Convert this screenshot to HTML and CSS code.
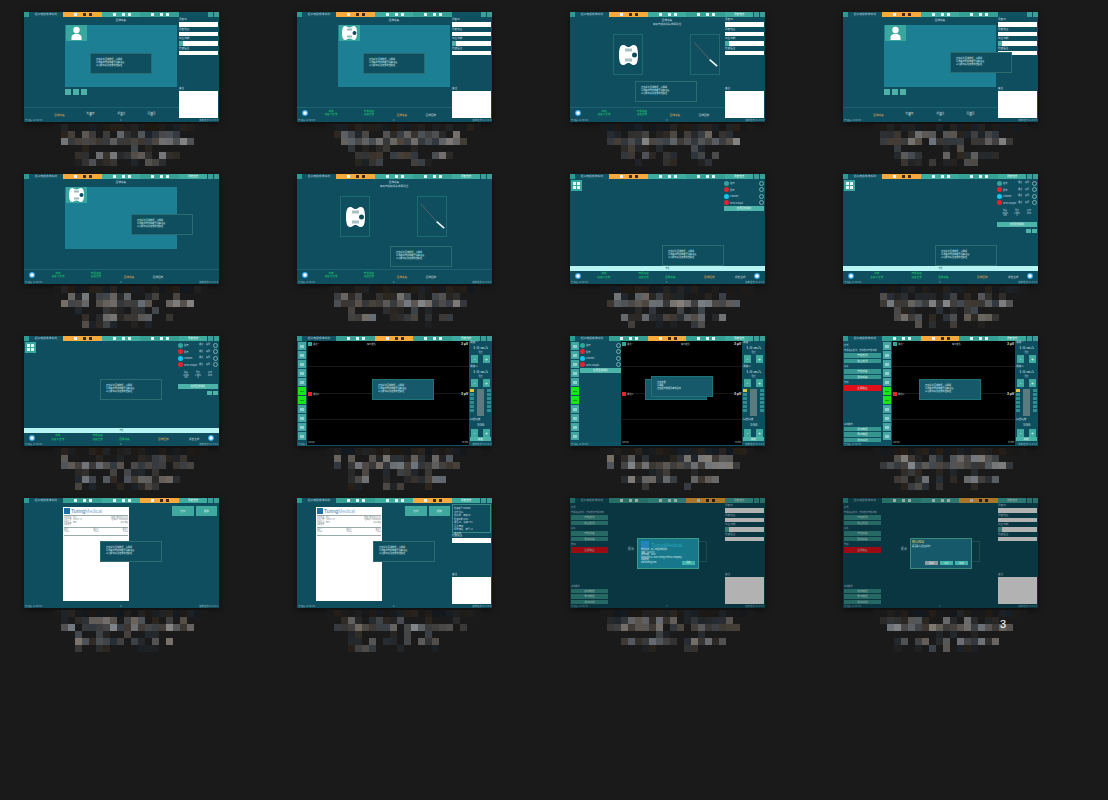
FILE: index.html
```html
<!DOCTYPE html>
<html lang="zh">
<head>
    <meta charset="UTF-8">
    <title>截图</title>
    <link rel="stylesheet" href="styles.css">
</head>
<body>
    <div id="gallery" class="gallery"></div>
    <script src="app.js"></script>
</body>
</html>
```
FILE: styles.css
```css
body{
    margin: 0;
    height: 800px;
    overflow: hidden;
    background-color: #1a1a1a;
    font-family: "Noto Sans CJK SC", "Liberation Sans", sans-serif;
}

.gallery{
    display: grid;
    grid-template-columns: repeat(4, 195px);
    grid-auto-rows: 162px;
    column-gap: 78px;
    padding: 12px 0 0 24px;
}

.tile{
    position: relative;
    width: 195px;
}

/* caption, pixelated */
.mosaic{
    display: grid;
    grid-template-columns: repeat(22, 7px);
    grid-auto-rows: 7px;
    position: absolute;
    left: 30px;
    top: 112px;
}
.loose-digit{
    position: absolute;
    left: 157px;
    top: 120px;
    font: 11px "Liberation Sans", sans-serif;
    color: #fff;
}

/* one screen */
.screen{
    position: relative;
    display: flex;
    flex-direction: column;
    width: 195px;
    height: 110px;
    overflow: hidden;
    background-color: #0f4e5f;
    box-shadow: 0 2px 6px rgba(0,0,0,.5);
    color: #c5dfe2;
    font-size: 2.6px;
    line-height: 1;
}
.dim{
    position: absolute;
    inset: 0;
    background-color: rgba(0,0,0,.3);
}

.topbar{
    display: flex;
    flex: none;
    height: 5px;
    background-color: #0f5261;
}
.home{ width: 5px; background-color: #2e9a94; }
.app-title{ width: 34px; text-align: center; line-height: 5px; font-size: 2.8px; color: #bcd; }
.tab{
    display: flex;
    align-items: center;
    width: 39px;
    padding-left: 11px;
    box-sizing: border-box;
    background-color: #3dac9f;
}
.tab.alt{ background-color: #359f94; }
.tab i{ width: 3px; height: 3px; background-color: #dff3f0; }
.tab i:first-child{ margin-right: 6px; }
.tab i:nth-child(2){ margin-right: 3px; }
.tab.on{ background-color: #f7a93b; }
.tab.on i + i{ background-color: #3d2a10; }
.tab4{
    width: 28px;
    background-color: #0f5261;
    text-align: center;
    line-height: 5px;
}
.tab4.lit{ background-color: #3dac9f; color: #fff; }
.sq{ width: 5px; margin-left: 1px; background-color: #3b9f98; }

.body{
    display: flex;
    flex: 1;
    min-height: 0;
}
.status{
    display: flex;
    flex: none;
    justify-content: space-between;
    height: 4px;
    padding: 0 1px;
    line-height: 4px;
    font-size: 2.4px;
    color: #8fb9c0;
}
.status.bar{ background-color: #0d5363; }

.main{
    display: flex;
    flex-direction: column;
    flex: 1;
    min-width: 0;
}
.stage{
    flex: 1;
    min-height: 0;
    padding-left: 41px;
}
.heading{
    width: 112px;
    height: 7px;
    line-height: 6px;
    text-align: center;
}
.heading.two{ height: 17px; line-height: 4px; padding-top: 1px; box-sizing: border-box; }
.panel{
    width: 112px;
    height: 62px;
    background-color: #1c7f93;
}
.avatar{
    display: block;
    margin: 1px;
    width: 21px;
    height: 16px;
    background-color: #3aa79f;
}
.mini-btns{
    display: flex;
    gap: 2px;
    margin-top: 2px;
}
.mini-btns i{ width: 6px; height: 6px; background-color: #4fb0a8; }

.boxes{
    display: flex;
    gap: 47px;
    padding-left: 2px;
}
.box{
    display: flex;
    align-items: center;
    justify-content: center;
    width: 30px;
    height: 41px;
    border: 1px solid #1d6a70;
    box-sizing: border-box;
}

.steps{
    display: flex;
    flex: none;
    align-items: flex-end;
    height: 11px;
    border-top: 1px solid #1b6272;
    box-sizing: border-box;
}
.step{
    position: relative;
    text-align: center;
    color: #c7d8d9;
    padding-bottom: 1px;
}
.step.cur{ color: #e2a64a; }
.step.ok{ color: #1fd36a; align-self: center; line-height: 1.2; padding: 0; }
.circle{
    width: 6px;
    height: 6px;
    align-self: center;
    border-radius: 50%;
    background: radial-gradient(circle, #fff 20%, #3da7ea 60%, #2178b8);
}

/* right hand form */
.side{
    display: flex;
    flex-direction: column;
    flex: none;
    width: 39px;
    margin-right: 1px;
    padding-top: 1px;
}
.side label{ height: 3px; margin-bottom: 1px; line-height: 3px; }
.field{ height: 4.5px; margin-bottom: 1px; background-color: #fff; }
.field.unit{ border-left: 4px solid #4fb0a8; }
.note-gap{ flex: 1; }
.notes{ height: 27px; margin-bottom: 0; background-color: #fff; }
.info{
    height: 29px;
    margin-bottom: 1px;
    padding: 2px 1px;
    border: 1px solid #3a8a85;
    box-sizing: border-box;
    line-height: 3.5px;
    font-size: 2.2px;
}

/* channel setup */
.tile-btn{
    display: grid;
    grid-template-columns: 3px 3px;
    gap: 1px;
    place-content: center;
    width: 11px;
    height: 11px;
    margin: 1px 0 0 1px;
    background-color: #3aa79f;
}
.tile-btn i{ height: 3px; background-color: #e8f6f5; }
.band{
    flex: none;
    height: 5px;
    background-color: #b6f5f4;
    color: #32606a;
    text-align: center;
    font-size: 2px;
    line-height: 5px;
}
.channels{
    position: absolute;
    right: 1px;
    top: 1px;
    width: 40px;
}
.channels.in-left{
    position: static;
    width: 41px;
    flex: none;
    padding-top: 1px;
}
.chan{
    display: flex;
    align-items: center;
    gap: 1px;
    height: 6.5px;
}
.chan b{ width: 5px; height: 5px; border-radius: 50%; flex: none; }
.chan span{ flex: 1; font-size: 2.2px; }
.chan em{ font-style: normal; font-size: 2px; margin-right: 2px; }
.chan u{ width: 5px; height: 5px; border: .5px solid #7fa9ae; border-radius: 50%; box-sizing: border-box; }
.bg-teal{ background-color: #36a39a; }
.bg-red{ background-color: #e3242b; }
.bg-cyan{ background-color: #14c6ef; }
.chan-note{
    display: grid;
    grid-template-columns: 1fr 1fr 1fr;
    height: 16px;
    padding: 4px 2px 0;
    box-sizing: border-box;
    font-size: 2px;
    line-height: 2.6px;
    text-align: center;
}
.wide-btn{
    height: 5px;
    background-color: #4cb3a9;
    color: #eaf8f6;
    text-align: center;
    line-height: 5px;
    font-size: 2.4px;
}
.pair{
    display: flex;
    justify-content: flex-end;
    gap: 1px;
    margin-top: 2px;
}
.pair i{ width: 5px; height: 4px; background-color: #4cb3a9; }

/* scope */
.icons{
    display: flex;
    flex-direction: column;
    flex: none;
    gap: 1px;
    width: 8px;
    padding: 1px 1px 0;
}
.icons i{
    display: flex;
    align-items: center;
    justify-content: center;
    height: 8px;
    background-color: #45a5a3;
    box-sizing: border-box;
}
.icons i::before{
    content: "";
    width: 4px;
    height: 3px;
    background-color: #8fd0cc;
}
.icons i.go{ background-color: #19e61a; }
.icons i.go::before{ height: 1px; background-color: #0f9a20; }
.scope{
    position: relative;
    flex: 1;
    display: flex;
    flex-direction: column;
    justify-content: space-evenly;
    margin-bottom: -3px;
    background-color: #000;
}
.scope hr{ width: 100%; height: 1px; margin: 0; border: 0; background-color: #161919; }
.tag{ position: absolute; color: #b9c9cb; font-size: 2.2px; }
.tag.uv{ right: 1px; color: #e4e4e4; font-size: 3.4px; font-weight: bold; }
.ch{ position: absolute; left: 1px; width: 4px; height: 4px; }
.ch + .tag{ left: 6px; }
.ctrl{
    display: flex;
    flex-direction: column;
    flex: none;
    width: 21px;
    padding: 0 1px;
    text-align: center;
}
.ctrl .cap{ flex: none; height: 3px; text-align: left; }
.ctrl .val{
    flex: none;
    height: 8px;
    font: 5px/8px "Liberation Serif", serif;
    color: #d4e8ea;
}
.ctrl .sub{ flex: none; height: 3px; font-size: 2px; }
.steppers{
    display: flex;
    flex: none;
    justify-content: space-between;
    padding: 0 1px;
    margin-bottom: 2px;
}
.steppers i{
    width: 7px;
    height: 8px;
    background-color: #3fa89f;
    color: #eaf8f6;
    font: normal 5px/8px "Liberation Sans", sans-serif;
}
.steppers.last{ margin-bottom: 0; }
.gauge{
    display: flex;
    flex: none;
    justify-content: space-between;
    height: 26.500px;
    margin-bottom: 2.500px;
}
.gauge-l, .gauge-r{ display: flex; flex-direction: column; gap: 1px; width: 4px; }
.gauge i{ height: 3px; background-color: #2f8d90; }
.gauge i.y{ background-color: #dcc542; }
.gauge-bar{ width: 7px; background-color: #5c7b80; }

/* left hand menu */
.menu{
    display: flex;
    flex-direction: column;
    flex: none;
    gap: 1px;
    width: 37px;
    padding: 2px 1px 0;
}
.menu p{ margin: 1px 0 0; height: 3px; line-height: 3px; font-size: 2.2px; }
.menu .btn{
    height: 4.5px;
    background-color: #37968f;
    color: #dff3f0;
    text-align: center;
    line-height: 4.5px;
}
.menu .btn.stop{ height: 6px; line-height: 6px; background-color: #e0101a; }
.menu .grow{ flex: 1; }

/* report */
.paper{
    flex: none;
    width: 66px;
    height: 94px;
    margin-top: 4px;
    padding: 1px;
    box-sizing: border-box;
    background-color: #fff;
    color: #6c7a80;
    font-size: 1.8px;
    line-height: 2.3px;
}
.paper-head{
    display: flex;
    gap: 1px;
    align-items: center;
    height: 6px;
    color: #7fb1d4;
    font: 5px/6px "Liberation Sans", sans-serif;
}
.paper-head b{ color: #2d6f9d; font-weight: normal; }
.paper-head i{ width: 6px; height: 6px; background-color: #1d6fa8; }
.paper-rule{ height: 1px; margin: 1px 0; background-color: #9aa; }
.paper-row{ display: flex; justify-content: space-between; }
.report{
    display: flex;
    flex: 1;
    align-items: flex-start;
    min-height: 0;
    padding-left: 39px;
}
.report.shift{ padding-left: 19px; }
.report-btns{
    display: flex;
    gap: 2px;
    margin: 3px 0 0 43px;
}
.report.shift .report-btns{ margin-left: 23px; }
.report-btns span{
    width: 21.5px;
    height: 10px;
    background-color: #3fa99f;
    color: #e8f6f5;
    text-align: center;
    line-height: 10px;
    font-size: 2.6px;
}

/* message boxes */
.dialog{
    position: absolute;
    width: 62px;
    height: 21px;
    padding: 4px 5px;
    box-sizing: border-box;
    background-color: #0f4e5f;
    border: 1px solid #2c6c70;
    color: #dceff1;
    font-size: 2.2px;
    line-height: 3.2px;
}
.dialog.flat{ background-color: #16596b; border-color: #1e7478; }
.dialog.about{
    background-color: #17788b;
    border-color: #3c9a8a;
    height: 31px;
    padding: 2px 3px;
    font-size: 2px;
    line-height: 2.6px;
}
.about-head{
    display: flex;
    gap: 2px;
    height: 8px;
    color: #2aa3bd;
    font: 5px/8px "Liberation Sans", sans-serif;
}
.about-head i{ width: 8px; height: 8px; background-color: #1e86b8; }
.about-ok{
    position: absolute;
    right: 3px;
    bottom: 3px;
    width: 13px;
    height: 4px;
    background-color: #3fb5a9;
    text-align: center;
    line-height: 4px;
}
.dialog.ask{
    background-color: #15596b;
    border-color: #3c8a7c;
    height: 31px;
    padding: 1px 1px;
}
.ask-title{ color: #e6d35a; font-size: 3px; line-height: 5px; }
.ask-btns{
    position: absolute;
    right: 3px;
    bottom: 3px;
    display: flex;
    gap: 2px;
}
.ask-btns span{
    width: 13px;
    height: 4px;
    background-color: #3fb5a9;
    text-align: center;
    line-height: 4px;
}
.ask-btns span:first-child{ background-color: #8d9ba0; }
.label-mid{
    position: absolute;
    font-size: 3px;
    color: #b7d0d3;
}
```
FILE: app.js
```js
// builds the sixteen thumbnails; every screen shares the same frame
var MSG = '<div>正在采集图像数据，请稍候</div><div>请勿移动电极或断开设备连接</div><div>以免影响采集结果的准确性</div>';

function topbar(active, lit) {
    var tabs = '';
    for (var i = 0; i < 3; i++) {
        tabs += '<span class="tab' + (i == active ? ' on' : (i == 1 ? '' : ' alt')) + '"><i></i><i></i><i></i></span>';
    }
    return '<div class="topbar"><span class="home"></span><span class="app-title">超声电极成像系统</span>' + tabs +
        '<span class="tab4' + (lit ? ' lit' : '') + '">' + (lit ? '患者信息' : '') + '</span><span class="sq"></span><span class="sq"></span></div>';
}

function status(bar) {
    return '<div class="status' + (bar ? ' bar' : '') + '"><span>已连接 12:00:00</span><span>0</span><span>版本信息 V1.0.0.0</span></div>';
}

function dialog(x, y, cls, html) {
    return '<div class="dialog ' + (cls || '') + '" style="left:' + x + 'px;top:' + y + 'px">' + (html || MSG) + '</div>';
}

function form() {
    return '<div class="side"><label>患者ID</label><div class="field"></div><label>患者姓名</label><div class="field"></div>' +
        '<label>出生日期</label><div class="field unit"></div><label>检查医生</label><div class="field"></div>' +
        '<div class="note-gap"></div><label>备注</label><div class="field notes"></div></div>';
}

function person() {
    return '<svg class="avatar" viewBox="0 0 21 16"><circle cx="10.5" cy="5" r="3.2" fill="#fff"/><path d="M5.5 15v-2.5c0-2.4 2.6-3.7 5-3.7s5 1.3 5 3.7V15z" fill="#fff"/></svg>';
}

function device() {
    return '<svg class="avatar" viewBox="0 0 21 16"><path d="M6 1c2 0 2 1.500 4.500 1.500S13 1 15 1s3 3 3 7-1 7-3 7-2-1.500-4.500-1.500S8 15 6 15s-3-3-3-7 1-7 3-7z" fill="#fff"/><rect x="8" y="3.500" width="5" height="2" fill="#9bb"/><rect x="8" y="10.500" width="5" height="2" fill="#9bb"/><circle cx="15.500" cy="8" r="2" fill="#0f4e5f"/></svg>';
}

function deviceLarge() {
    return '<svg width="21" height="20" viewBox="0 0 21 20"><path d="M5 0c3 0 3 2 5.500 2S13 0 16 0c3 0 4 4 4 10s-1 10-4 10-3-2-5.500-2S8 20 5 20c-3 0-4-4-4-10S2 0 5 0z" fill="#fff"/><rect x="7" y="3.500" width="7" height="3" fill="#a9c0c4"/><rect x="7" y="13.500" width="7" height="3" fill="#a9c0c4"/><circle cx="16.500" cy="10" r="2.500" fill="#0f4e5f"/></svg>';
}

function needle() {
    return '<svg width="30" height="41" viewBox="0 0 30 41"><path d="M3 7 L20 26" stroke="#8f6f72" stroke-width=".6"/><path d="M20 26 L28 33" stroke="#e8f2f3" stroke-width="1.800"/></svg>';
}

function panelStage(pic, withButtons) {
    return '<div class="stage"><div class="heading">图像采集</div><div class="panel">' + pic + '</div>' +
        (withButtons ? '<div class="mini-btns"><i></i><i></i><i></i></div>' : '') + '</div>';
}

function boxesStage() {
    return '<div class="stage"><div class="heading two"><div>图像采集</div><div>请将电极和探头放置到位</div></div><div class="boxes"><div class="box">' +
        deviceLarge() + '</div><div class="box">' + needle() + '</div></div></div>';
}

function steps(mode, current) {
    var html = '<div class="steps">';
    if (mode) {
        html += '<span style="width:5px"></span><span class="circle"></span>';
        html += '<span class="step ok" style="width:46px"><div>状态</div><div>连接 0 正常</div></span>';
        html += '<span class="step ok" style="margin-left:-8px;padding-left:8px;width:30px"><div>电极连接</div><div>连接正常</div></span>';
        html += '<span class="step cur" style="width:28px;margin-left:4px">' + (current || '图像采集') + '</span><span class="step" style="width:30px">图像回放</span>';
    } else {
        html += '<span style="width:29px"></span><span class="step cur" style="width:13px">图像采集</span><span class="step" style="margin-left:20px;width:9px">检查结果</span>' +
            '<span class="step" style="margin-left:22px;width:9px">报告生成</span><span class="step" style="margin-left:21px;width:9px">图像回放</span>';
    }
    return html + '</div>';
}

function wideSteps() {
    return '<div class="steps" style="height:9px;border:0"><span style="width:5px"></span><span class="circle"></span>' +
        '<span class="step ok" style="width:46px"><div>状态</div><div>连接 0 正常</div></span><span class="step ok" style="width:34px"><div>电极连接</div><div>连接正常</div></span>' +
        '<span class="step cur" style="width:20px;color:#1fd36a">图像采集</span><span class="step cur" style="width:34px;margin-left:12px">图像回放</span><span class="step" style="width:28px">报告生成</span>' +
        '<span style="flex:1"></span><span class="circle"></span><span style="width:5px"></span></div>';
}

function channels(detail, cls) {
    var rows = [['bg-teal', '脑电'], ['bg-red', '肌电'], ['bg-cyan', 'Channel'], ['bg-red', 'SPEC Output']];
    var html = '<div class="channels ' + (cls || '') + '">';
    rows.forEach(function (r) {
        html += '<div class="chan"><b class="' + r[0] + '"></b><span>' + r[1] + '</span>' + (detail ? '<em>通道</em><em>设置</em>' : '') + '<u></u></div>';
    });
    if (detail) html += '<div class="chan-note"><span>脉宽<br>100μs<br>1Hz</span><span>强度<br>1.0mA<br>0</span><span>频率<br>10Hz<br>-</span></div>';
    html += '<div class="wide-btn">应用全部通道</div>';
    if (detail) html += '<div class="pair"><i></i><i></i></div>';
    return html + '</div>';
}

function listStage(detail) {
    return '<div class="main"><div class="stage" style="padding:0;position:relative"><div class="tile-btn"><i></i><i></i><i></i><i></i></div>' + channels(detail) +
        '</div><div class="band">电极</div>' + wideSteps() + '</div>';
}

function iconsCol() {
    var html = '<div class="icons">';
    for (var i = 0; i < 11; i++) html += '<i' + (i == 5 || i == 6 ? ' class="go"' : '') + '></i>';
    return html + '</div>';
}

function scope() {
    return '<div class="scope"><span class="tag" style="left:60px;top:2px">实时波形</span><span class="tag uv" style="top:1px">3 μV</span><span class="ch bg-teal" style="top:1px"></span><span class="tag" style="top:2px">通道一</span>' +
        '<hr><hr><hr><span class="ch bg-red" style="top:51px"></span><span class="tag" style="top:52px">通道二</span><span class="tag uv" style="top:51px">3 μV</span>' +
        '<span class="tag" style="left:1px;bottom:2px">100 μs</span><span class="tag" style="right:1px;bottom:2px">50 ms</span></div>';
}

function ctrl() {
    function amp(name) {
        return '<div class="cap">' + name + '</div><div class="val">1.0 mA</div><div class="sub">强度</div><div class="steppers"><i>-</i><i>+</i></div>';
    }
    var gauge = '<div class="gauge"><div class="gauge-l"><i class="y"></i><i></i><i></i><i></i><i></i><i></i></div><div class="gauge-bar"></div><div class="gauge-r"><i></i><i></i><i></i><i></i><i></i><i></i></div></div>';
    return '<div class="ctrl">' + amp('通道一') + amp('通道二') + gauge + '<div class="cap">扫描速度</div><div class="val">100</div><div class="steppers last"><i>-</i><i>+</i></div><div class="wide-btn" style="height:4px;line-height:4px">确定</div></div>';
}

function menu() {
    return '<div class="menu"><p>模式</p><p>电极连接检测，自动检测电极状态</p><div class="btn">开始检测</div><div class="btn">停止检测</div>' +
        '<p>采集</p><div class="btn">开始采集</div><div class="btn">暂停采集</div><p>急停</p><div class="btn stop">立即停止</div><div class="grow"></div>' +
        '<p>系统操作</p><div class="btn">保存数据</div><div class="btn">导出数据</div><div class="btn">退出系统</div></div>';
}

function paper() {
    return '<div class="paper"><div class="paper-head"><i></i><span><b>Turing</b>Medical</span></div><div class="paper-rule"></div>' +
        '<div class="paper-row"><span>患者姓名：张三</span><span>检查日期 2023-01-01</span></div><div class="paper-row"><span>出生日期：1980-01-01</span><span>检查编号 000000000</span></div><div class="paper-row"><span>检查医生：李四</span><span>科室 神经</span></div>' +
        '<div class="paper-row"><span>诊断结果</span></div><div class="paper-rule"></div><div class="paper-row"><span>通道一</span><span>通道二</span><span>通道三</span></div><div class="paper-row"><span>1.0mA</span><span>1.0mA</span><span>1.0mA</span></div><div class="paper-rule"></div></div>';
}

function report(shift, side) {
    return '<div class="report' + (shift ? ' shift' : '') + '">' + paper() + '<div class="report-btns"><span>打印</span><span>保存</span></div></div>' + (side || '');
}

function infoForm() {
    return '<div class="side"><div class="info">检查编号 000000<br>患者 张三<br>性别 男　年龄 40<br>检查日期 2023<br>通道 16　设备 TM1<br>医生 李四<br>科室 神经　床号 12<br>备注 无</div><label>检查医生</label><div class="field"></div><div class="note-gap"></div><label>备注</label><div class="field notes"></div></div>';
}

function stdMain(stage, stepRow) {
    return '<div class="main">' + stage + stepRow + '</div>';
}

function frame(active, lit, body, over, bar) {
    return '<div class="screen">' + topbar(active, lit) + '<div class="body">' + body + '</div>' + status(bar) + (over || '') + '</div>';
}

var about = '<div class="about-head"><i></i><span>TuringMedical</span></div><div>软件名称：超声电极成像系统</div><div>版本：V1.0.0.0</div><div>发布日期：2023</div><div>Copyright (C) 2023 Turing Medical Company</div><div>网站地址</div><div>www.turing.com</div><div class="about-ok">确定</div>';
var ask = '<div class="ask-title">确认退出</div><div>是否确认退出系统？</div><div class="ask-btns"><span>取消</span><span>关机</span><span>确定</span></div>';

var screens = [
    frame(0, false, stdMain(panelStage(person(), true), steps(0)) + form(), dialog(66, 41)),
    frame(0, false, stdMain(panelStage(device(), false), steps(1)) + form(), dialog(66, 41)),
    frame(0, true, stdMain(boxesStage(), steps(1)) + form(), dialog(65, 69)),
    frame(0, false, stdMain(panelStage(person(), true), steps(0)) + form(), dialog(107, 40)),
    frame(0, true, stdMain(panelStage(device(), false), steps(1)), dialog(107, 40)),
    frame(0, true, stdMain(boxesStage(), steps(1)), dialog(93, 72)),
    frame(0, true, listStage(false), dialog(92, 71)),
    frame(0, true, listStage(true), dialog(92, 71)),
    frame(0, true, listStage(true), dialog(76, 43)),
    frame(1, true, iconsCol() + scope() + ctrl(), dialog(75, 43, 'flat'), true),
    frame(1, true, iconsCol() + channels(false, 'in-left') + scope() + ctrl(),
        dialog(75, 43, 'flat', ' ') + dialog(81, 40, 'flat', '<div>正在处理</div><div>请稍候</div><div>正在保存数据到本地磁盘</div>'), true),
    frame(1, true, menu() + iconsCol() + scope() + ctrl(), dialog(76, 43, 'flat'), true),
    frame(2, true, report(false), dialog(76, 43)),
    frame(2, true, report(true, infoForm()), dialog(76, 43)),
    frame(2, true, menu() + '<div class="main"></div>' + form(),
        dialog(75, 43, '', ' ') + '<div class="dim"></div><span class="label-mid" style="left:58px;top:50px">提示</span>' + dialog(67, 40, 'about', about)),
    frame(2, true, menu() + '<div class="main"></div>' + form(),
        dialog(75, 43, '', ' ') + '<div class="dim"></div><span class="label-mid" style="left:58px;top:50px">提示</span>' + dialog(67, 40, 'ask', ask))
];

// small seeded generator so the blurred captions stay the same on each load
function mosaic(seed) {
    var state = seed * 7919 + 13;
    function rnd() {
        state = (state * 1103 + 12345) % 65536;
        return state / 65536;
    }
    var rows = [
        { from: 1, n: 20, lo: 24, hi: 36, hole: 0 },
        { from: 1, n: 18, lo: 35, hi: 125, hole: 0.3 },
        { from: 1, n: 19, lo: 55, hi: 135, hole: 0.05 },
        { from: 3, n: 12, lo: 35, hi: 75, hole: 0.6 },
        { from: 3, n: 15, lo: 40, hi: 125, hole: 0.25 },
        { from: 3, n: 13, lo: 32, hi: 85, hole: 0.55 }
    ];
    var html = '<div class="mosaic">';
    rows.forEach(function (r) {
        for (var c = 0; c < 22; c++) {
            var on = c >= r.from && c < r.from + r.n && rnd() >= r.hole;
            var t = rnd();
            var v = on ? Math.round(r.lo + t * t * (r.hi - r.lo)) : 26;
            var warm = on ? Math.round((rnd() - 0.5) * 14) : 0;
            html += '<span style="background-color:rgb(' + (v + warm) + ',' + v + ',' + (v - warm) + ')"></span>';
        }
    });
    return html + '</div>';
}

var out = '';
screens.forEach(function (s, i) {
    out += '<div class="tile">' + s + mosaic(i + 1) + (i == 15 ? '<span class="loose-digit">3</span>' : '') + '</div>';
});
document.getElementById('gallery').innerHTML = out;
```
